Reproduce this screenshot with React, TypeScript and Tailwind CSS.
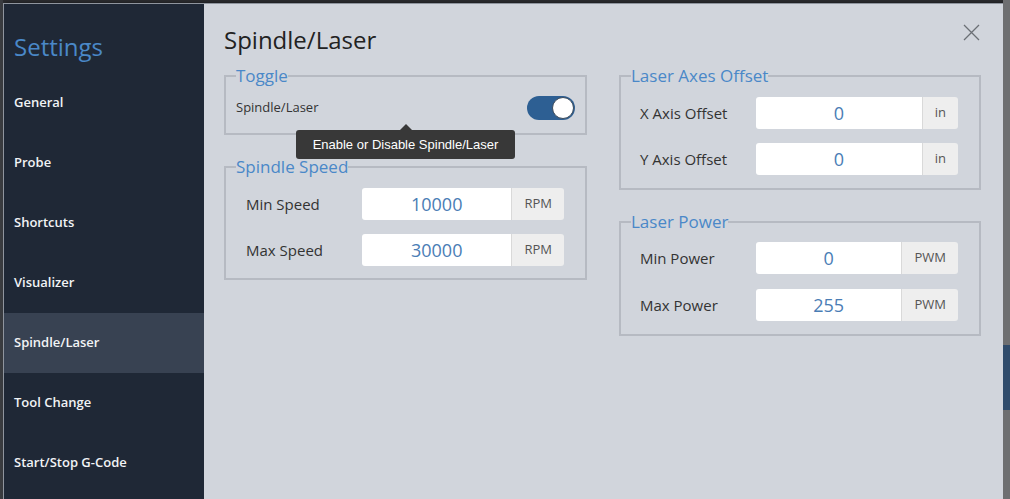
const navItems = ["General", "Probe", "Shortcuts", "Visualizer", "Spindle/Laser", "Tool Change", "Start/Stop G-Code"];

function Field({ label, value, unit }: { label: string; value: string; unit: string }) {
  return (
    <div className="flex items-center h-[32px]">
      <span className="w-[116px] shrink-0 text-[15px] text-[#333]">{label}</span>
      <div className="flex w-[202px] h-[32px] rounded-[3px] overflow-hidden">
        <div className="flex-1 bg-white flex items-center justify-center text-[18px] text-[#4a7db5]">{value}</div>
        <div className="bg-[#eeeeee] border-l border-[#d9d9d9] px-[12px] flex items-center text-[13px] text-[#555]">{unit}</div>
      </div>
    </div>
  );
}

function Group({ title, children, className = "" }: { title: string; children: React.ReactNode; className?: string }) {
  return (
    <fieldset className={`border-2 border-[#b6bac2] px-[10px] ${className}`}>
      <legend className="text-[17px] leading-[24px] text-[#4a88c8]">{title}</legend>
      {children}
    </fieldset>
  );
}

export default function App() {
  return (
    <div className="w-[1010px] h-[499px] overflow-hidden bg-[#2a2b2e] flex font-['Open_Sans',sans-serif]">
      <div className="w-[3px] shrink-0 bg-[#3a3c40]" />
      <div className="mt-[3px] flex w-[1000px] h-[520px] shrink-0 border-l border-t border-[#8f959e] shadow-[2px_0_3px_rgba(0,0,0,0.5)]">
        <aside className="w-[200px] shrink-0 bg-[#1f2836] flex flex-col">
          <h1 className="h-[69px] pl-[10px] pt-[27px] text-[24px] leading-[32px] text-[#4a88c8]">Settings</h1>
          {navItems.map((item) => (
            <div
              key={item}
              className={`h-[60px] pl-[10px] flex items-center text-[13px] font-semibold text-[#f1f3f5] ${item === "Spindle/Laser" ? "bg-[#384252]" : ""}`}
            >
              {item}
            </div>
          ))}
        </aside>
        <main className="relative flex-1 bg-[#d1d5dc] pl-[20px] pr-[22px] pt-[20px]">
          <button className="absolute right-[23px] top-[20px] text-[#6b6f75]">
            <svg width="17" height="17" viewBox="0 0 17 17" fill="none" stroke="currentColor" strokeWidth="1.3">
              <path d="M1 1L16 16M16 1L1 16" />
            </svg>
          </button>
          <h2 className="text-[24px] leading-[32px] text-[#222]">Spindle/Laser</h2>
          <div className="mt-[8px] grid grid-cols-[363px_362px] gap-x-[32px]">
            <div className="flex flex-col gap-[20px]">
              <Group title="Toggle" className="relative pb-[13px]">
                <div className="mt-[8px] flex items-center justify-between h-[24px]">
                  <span className="text-[13px] text-[#333]">Spindle/Laser</span>
                  <div className="w-[48px] h-[24px] rounded-full bg-[#2d5f93] flex items-center justify-end pr-[1px]">
                    <div className="w-[22px] h-[22px] rounded-full bg-white border border-[#3c4a5a]" />
                  </div>
                </div>
                <div className="absolute left-[70px] top-[36px] z-10 flex flex-col items-center">
                  <div className="w-0 h-0 border-l-[6px] border-r-[6px] border-b-[6px] border-l-transparent border-r-transparent border-b-[#383838]" />
                  <div className="w-[219px] h-[29px] rounded-[3px] bg-[#383838] flex items-center justify-center text-[13px] text-white font-['Liberation_Sans',Arial,sans-serif]">
                    Enable or Disable Spindle/Laser
                  </div>
                </div>
              </Group>
              <Group title="Spindle Speed" className="pb-[12px]">
                <div className="mt-[9px] pl-[10px] flex flex-col gap-[14px]">
                  <Field label="Min Speed" value="10000" unit="RPM" />
                  <Field label="Max Speed" value="30000" unit="RPM" />
                </div>
              </Group>
            </div>
            <div className="flex flex-col gap-[20px]">
              <Group title="Laser Axes Offset" className="pb-[13px]">
                <div className="mt-[9px] pl-[9px] flex flex-col gap-[14px]">
                  <Field label="X Axis Offset" value="0" unit="in" />
                  <Field label="Y Axis Offset" value="0" unit="in" />
                </div>
              </Group>
              <Group title="Laser Power" className="pb-[13px]">
                <div className="mt-[8px] pl-[9px] flex flex-col gap-[15px]">
                  <Field label="Min Power" value="0" unit="PWM" />
                  <Field label="Max Power" value="255" unit="PWM" />
                </div>
              </Group>
            </div>
          </div>
        </main>
      </div>
      <div className="flex-1 bg-[#6e6f71] flex flex-col">
        <div className="h-[345px]" />
        <div className="h-[65px] bg-[#2f4b6b]" />
      </div>
    </div>
  );
}
